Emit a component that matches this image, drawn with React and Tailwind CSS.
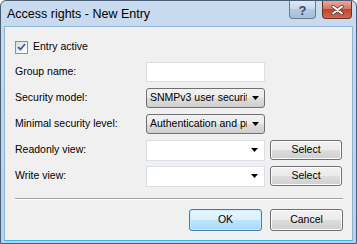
import React from 'react';

const font = { fontFamily: '"Liberation Sans", Arial, sans-serif' };

const Arrow = () => (
  <svg width="7" height="4" viewBox="0 0 7 4" className="shrink-0">
    <path d="M0 0h7L3.5 4z" fill="#000" />
  </svg>
);

const DropList = ({ text }) => (
  <div className="flex items-center w-[119px] h-[20px] rounded-[3px] border border-[#707070] bg-[linear-gradient(#f2f2f2_0%,#ebebeb_50%,#dddddd_50%,#cfcfcf_100%)] pl-[3px] pr-[5px]">
    <span className="w-[99px] mr-[5px] whitespace-nowrap overflow-hidden text-[10.5px] text-black">{text}</span>
    <Arrow />
  </div>
);

const Combo = () => (
  <div className="flex items-center justify-end w-[119px] h-[21px] border border-[#dadfe6] bg-white pr-[6px]">
    <Arrow />
  </div>
);

const Button = ({ children, wide, isDefault }) => (
  <button
    className={
      'flex items-center justify-center rounded-[3px] border text-[10.5px] text-black ' +
      (wide ? 'w-[73px] h-[22px] ' : 'w-[72px] h-[20px] ') +
      (isDefault
        ? 'border-[#3c7fb1] bg-[linear-gradient(#eaf6fd_0%,#d9f0fc_50%,#bee6fd_50%,#a7d9f5_100%)] shadow-[inset_0_0_0_1px_#c6ecff]'
        : 'border-[#707070] bg-[linear-gradient(#f2f2f2_0%,#ebebeb_50%,#dddddd_50%,#cfcfcf_100%)] shadow-[inset_0_0_0_1px_#fcfcfc]')
    }
  >
    {children}
  </button>
);

export default function App() {
  return (
    <div style={font} className="w-[357px] h-[244px] flex flex-col border border-[#4b5d75] rounded-t-[6px] bg-[linear-gradient(#c9dbef,#b9d1ea)] overflow-hidden">
      {/* Title bar */}
      <div className="h-[25px] flex items-center pl-[6px] pr-[4px] shrink-0">
        <span className="flex-1 text-[12.5px] text-black pt-[1px]">Access rights - New Entry</span>
        <div className="flex gap-[6px] self-start">
          <div className="w-[27px] h-[18px] rounded-b-[4px] border border-[#6a7b91] border-t-0 bg-[linear-gradient(#dfe9f5_0%,#c6d6ea_50%,#b4c8e2_50%,#a6bfdd_100%)] flex items-center justify-center text-[13px] font-bold text-[#3b4b63] leading-none pt-[1px]">?</div>
          <div className="w-[30px] h-[18px] rounded-b-[4px] border border-[#6b3127] border-t-0 bg-[linear-gradient(#e9a99c_0%,#d2715f_50%,#c0452f_50%,#d0694f_100%)] flex items-center justify-center">
            <svg width="13" height="10" viewBox="0 0 13 10">
              <path d="M2 1.5l9 7M11 1.5l-9 7" stroke="#3a3a3a" strokeWidth="3.4" strokeLinecap="round" />
              <path d="M2 1.5l9 7M11 1.5l-9 7" stroke="#fff" strokeWidth="2" strokeLinecap="round" />
            </svg>
          </div>
        </div>
      </div>

      {/* Client area */}
      <div className="flex-1 mx-[3px] mb-[2px] border border-[#8fb3d8] border-b-[#33b4e4] bg-[#f0f0f0] flex flex-col pl-[10px] pr-[9px] pt-[15px] text-[10.5px] text-black">
        <label className="flex items-center gap-[5px] h-[10px]">
          <span className="w-[13px] h-[13px] border border-[#8e8f8f] bg-[linear-gradient(135deg,#dcdcdc,#ffffff)] flex items-center justify-center">
            <svg width="9" height="8" viewBox="0 0 9 8">
              <path d="M1 4l2.5 2.5L8 1" fill="none" stroke="#3d5ea3" strokeWidth="1.8" />
            </svg>
          </span>
          Entry active
        </label>

        <div className="grid grid-cols-[131px_119px_1fr] auto-rows-[20px] gap-y-[6px] items-center mt-[10px]">
          <span>Group name:</span>
          <div className="w-[119px] h-[20px] border border-[#dadfe6] bg-white" />
          <span />

          <span>Security model:</span>
          <DropList text="SNMPv3 user security model" />
          <span />

          <span>Minimal security level:</span>
          <DropList text="Authentication and privacy" />
          <span />

          <span>Readonly view:</span>
          <Combo />
          <div className="pl-[5px]"><Button>Select</Button></div>

          <span>Write view:</span>
          <Combo />
          <div className="pl-[5px]"><Button>Select</Button></div>
        </div>

        <div className="mt-[12px] h-[2px] border-t border-[#a0a0a0] border-b border-b-white" />

        <div className="flex justify-end gap-[8px] mt-[9px]">
          <Button wide isDefault>OK</Button>
          <Button wide>Cancel</Button>
        </div>
      </div>
    </div>
  );
}
